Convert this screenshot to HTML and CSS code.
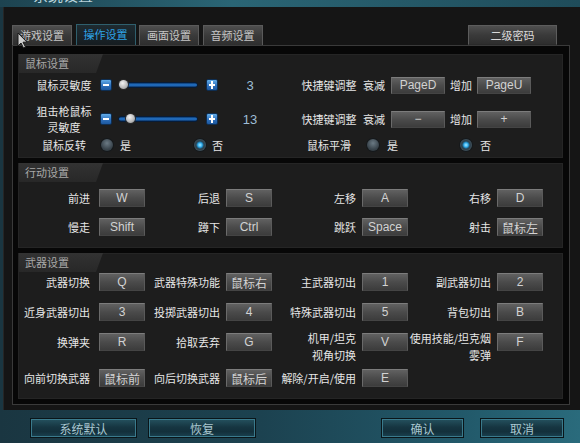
FILE: index.html
```html
<!DOCTYPE html>
<html lang="zh-CN">
<head>
<meta charset="utf-8">
<title>操作设置</title>
<link rel="stylesheet" href="styles.css">
</head>
<body>
<div class="titlebar"><span class="title">系统设置</span></div>
<div class="window">
  <div class="tabbar">
    <div class="tab">游戏设置</div>
    <div class="tab active">操作设置</div>
    <div class="tab">画面设置</div>
    <div class="tab">音频设置</div>
    <div class="pwd">二级密码</div>
  </div>
  <div class="content">
    <section class="section sec-mouse">
      <div class="sec-head">鼠标设置</div>
      <div class="mrow r1">
        <div class="mlabel">鼠标灵敏度</div>
        <div class="slider-group">
          <span class="sbtn minus"></span>
          <span class="track"><span class="thumb" style="left:0px"></span></span>
          <span class="sbtn plus"></span>
          <span class="value">3</span>
        </div>
        <div class="mlabel2">快捷键调整</div>
        <div class="hotkeys">
          <span class="hk-label first">衰减</span><span class="key wide">PageD</span><span class="hk-label">增加</span><span class="key wide">PageU</span>
        </div>
      </div>
      <div class="mrow r2">
        <div class="mlabel two">狙击枪鼠标<br>灵敏度</div>
        <div class="slider-group">
          <span class="sbtn minus"></span>
          <span class="track"><span class="thumb" style="left:7px"></span></span>
          <span class="sbtn plus"></span>
          <span class="value">13</span>
        </div>
        <div class="mlabel2">快捷键调整</div>
        <div class="hotkeys">
          <span class="hk-label first">衰减</span><span class="key wide">−</span><span class="hk-label">增加</span><span class="key wide">+</span>
        </div>
      </div>
      <div class="mrow r3">
        <div class="mlabel">鼠标反转</div>
        <div class="radios left">
          <span class="radio"></span><span class="rlabel">是</span>
          <span class="radio on second"></span><span class="rlabel">否</span>
        </div>
        <div class="mlabel2">鼠标平滑</div>
        <div class="radios right">
          <span class="radio"></span><span class="rlabel">是</span>
          <span class="radio on second"></span><span class="rlabel">否</span>
        </div>
      </div>
    </section>

    <section class="section sec-move">
      <div class="sec-head">行动设置</div>
      <div class="kgrid">
        <div class="kl c1">前进</div><div class="key">W</div>
        <div class="kl">后退</div><div class="key">S</div>
        <div class="kl">左移</div><div class="key">A</div>
        <div class="kl">右移</div><div class="key">D</div>
        <div class="kl c1">慢走</div><div class="key">Shift</div>
        <div class="kl">蹲下</div><div class="key">Ctrl</div>
        <div class="kl">跳跃</div><div class="key">Space</div>
        <div class="kl">射击</div><div class="key">鼠标左</div>
      </div>
    </section>

    <section class="section sec-weapon">
      <div class="sec-head">武器设置</div>
      <div class="kgrid">
        <div class="kl c1">武器切换</div><div class="key">Q</div>
        <div class="kl">武器特殊功能</div><div class="key">鼠标右</div>
        <div class="kl">主武器切出</div><div class="key">1</div>
        <div class="kl">副武器切出</div><div class="key">2</div>

        <div class="kl c1">近身武器切出</div><div class="key">3</div>
        <div class="kl">投掷武器切出</div><div class="key">4</div>
        <div class="kl">特殊武器切出</div><div class="key">5</div>
        <div class="kl">背包切出</div><div class="key">B</div>

        <div class="kl c1">换弹夹</div><div class="key">R</div>
        <div class="kl">拾取丢弃</div><div class="key">G</div>
        <div class="kl two">机甲/坦克<br>视角切换</div><div class="key">V</div>
        <div class="kl two">使用技能/坦克烟<br>雾弹</div><div class="key">F</div>

        <div class="kl c1">向前切换武器</div><div class="key">鼠标前</div>
        <div class="kl">向后切换武器</div><div class="key">鼠标后</div>
        <div class="kl">解除/开启/使用</div><div class="key">E</div>
      </div>
    </section>
  </div>
</div>
<div class="bottombar">
  <div class="bbtn b1">系统默认</div>
  <div class="bbtn b2">恢复</div>
  <div class="bbtn b3">确认</div>
  <div class="bbtn b4">取消</div>
</div>
<svg class="cursor" width="11" height="17" viewBox="0 0 11 17">
  <path d="M1 1 L1 14 L4 11 L6.5 16 L8.5 15 L6 10.2 L10 10.2 Z" fill="#cfcfcf" stroke="#1a1a1a" stroke-width="1" stroke-linejoin="round"/>
</svg>
</body>
</html>
```

FILE: styles.css
```css
* {
  box-sizing: border-box;
  margin: 0;
  padding: 0;
}

html,
body {
  width: 580px;
  height: 443px;
  overflow: hidden;
}

body {
  position: relative;
  background: linear-gradient(90deg, #1a3641 0%, #1c4250 45%, #22596a 80%, #2a6b7c 100%);
  font-family: "Noto Sans CJK SC", "Noto Sans", sans-serif;
  font-size: 11px;
  color: #e6e6e6;
}

/* ---------- title strip ---------- */
.titlebar {
  height: 7px;
  overflow: hidden;
  display: flex;
  align-items: flex-end;
  padding-left: 33px;
  background: linear-gradient(90deg, #1d4350 0%, #2a6575 40%, #1f4c5a 100%);
}

.title {
  font-size: 15px;
  line-height: 15px;
  margin-bottom: 5px;
  color: #b9d3db;
  white-space: nowrap;
}

/* ---------- window ---------- */
.window {
  margin-left: 3px;
  height: 403px;
  background: #151515;
  border-left: 1px solid #262626;
  padding: 17px 10px 0 8px;
}

.tabbar {
  display: flex;
  align-items: flex-end;
  height: 21px;
  gap: 3.5px;
}

.tab {
  width: 60px;
  height: 20px;
  line-height: 18px;
  text-align: center;
  color: #c6c6c6;
  background: linear-gradient(#4e4e4e, #3a3a3a 50%, #2e2e2e);
  border: 1px solid #5a5a5a;
  border-bottom: none;
}

.tab.active {
  height: 21px;
  line-height: 19px;
  background: linear-gradient(#1e2b31, #161d21);
  border-color: #2f5f6d;
  color: #2ea3e6;
}

.pwd {
  margin-left: auto;
  margin-right: 13px;
  width: 89px;
  height: 20px;
  line-height: 18px;
  text-align: center;
  color: #dadada;
  background: linear-gradient(#4e4e4e, #3a3a3a 50%, #2e2e2e);
  border: 1px solid #5c5c5c;
  border-bottom-color: #2a2a2a;
}

.content {
  height: 360px;
  border: 1px solid #3a3a3a;
  background: #070707;
  padding: 7px 6px 0 5px;
}

/* ---------- sections ---------- */
.section {
  background: #1d1d1d;
  box-shadow: inset 0 0 0 1px #252525;
  margin-bottom: 5px;
}

.sec-mouse { height: 104px; }
.sec-move { height: 85px; }
.sec-weapon { height: 146px; }

.sec-head {
  width: 84px;
  height: 19px;
  margin: 1px 0 0 1px;
  padding-left: 6px;
  line-height: 19px;
  color: #a8a8a8;
  background: linear-gradient(#323232, #282828);
  clip-path: polygon(0 0, 100% 0, calc(100% - 7px) 100%, 0 100%);
}

/* ---------- mouse rows ---------- */
.mrow {
  display: grid;
  grid-template-columns: 82px 196px 66px 1fr;
  align-items: center;
}

.r1 { height: 24px; }
.r2 { height: 36px; margin-top: 4px; }
.r3 { height: 14px; }

.mlabel {
  text-align: center;
  padding-left: 10px;
  line-height: 14px;
  white-space: nowrap;
}

.mlabel.two {
  line-height: 16px;
}

.mlabel2 {
  text-align: center;
  white-space: nowrap;
}

.slider-group,
.hotkeys,
.radios {
  display: flex;
  align-items: center;
}

.sbtn {
  position: relative;
  width: 12px;
  height: 12px;
  border-radius: 2px;
  background: linear-gradient(#64aeea, #2e70bc 55%, #1d589f);
  border: 1px solid #0e2e52;
}

.sbtn::before {
  content: "";
  position: absolute;
  left: 2px;
  right: 2px;
  top: 4px;
  height: 2px;
  background: #ffffff;
}

.plus {
  margin-left: 8px;
}

.plus::after {
  content: "";
  position: absolute;
  top: 1px;
  bottom: 1px;
  left: 4px;
  width: 2px;
  background: #ffffff;
}

.track {
  position: relative;
  margin-left: 6px;
  width: 80px;
  height: 6px;
  border-radius: 3px;
  background: linear-gradient(#0d3a6e, #2678d0 50%, #0c3566);
  border: 1px solid #071c38;
}

.thumb {
  position: absolute;
  top: -3px;
  width: 9px;
  height: 9px;
  border-radius: 50%;
  background: radial-gradient(circle at 40% 35%, #f2f2f2, #bdbdbd 55%, #8a8a8a);
  box-shadow: 0 0 0 1px #2a2a2a;
}

.value {
  width: 64px;
  text-align: center;
  font-family: "Liberation Sans", sans-serif;
  font-size: 13px;
  color: #9dbdd6;
}

.hk-label {
  margin-left: 5px;
  white-space: nowrap;
}

.hk-label.first {
  margin-left: 1px;
}

.hk-label.first + .key {
  margin-left: 6px;
}

.hk-label + .key {
  margin-left: 5px;
}

.radio {
  width: 12px;
  height: 12px;
  border-radius: 50%;
  background: radial-gradient(circle at 50% 35%, #6b7a84, #3b464e 60%, #262e34);
  box-shadow: 0 0 0 1px #15191c;
}

.radio.on {
  background: radial-gradient(circle, #a6e8ff 0, #3cb4f0 2px, #1d78aa 3px, #2b3f4b 4px, #3e505b 6px);
}

.radios.left .radio { margin-left: 1px; }
.radios.left .rlabel { margin-left: 7px; }
.radios.left .radio.second { margin-left: 63px; }
.radios.left .radio.second + .rlabel { margin-left: 6px; }

.radios.right .radio { margin-left: 5px; }
.radios.right .rlabel { margin-left: 8px; }
.radios.right .radio.second { margin-left: 62px; }

.rlabel {
  line-height: 14px;
}

/* ---------- key boxes ---------- */
.key {
  height: 18px;
  display: flex;
  align-items: center;
  justify-content: center;
  background: linear-gradient(#616161, #4b4b4b 50%, #3c3c3c);
  border: 1px solid #6c6c6c;
  border-color: #7c7c7c #5a5a5a #444444 #6a6a6a;
  color: #d2d2d2;
  font-family: "Liberation Sans", "Noto Sans CJK SC", sans-serif;
  font-size: 12px;
  white-space: nowrap;
}

.key.wide {
  width: 54px;
  height: 17px;
}

.kgrid {
  display: grid;
  grid-template-columns: 81px 46px 81px 46px 90px 46px 89px 46px;
  align-items: start;
}

.sec-move .kgrid {
  margin-top: 7px;
  grid-template-rows: 18px 18px;
  row-gap: 11px;
}

.sec-weapon .kgrid {
  margin-top: 1px;
  grid-template-rows: 30px 30px 36px 18px;
}

.kl {
  text-align: right;
  padding-right: 6px;
  line-height: 18px;
  white-space: nowrap;
}

.kl.c1 {
  padding-right: 9px;
}

.kl.two {
  line-height: 17px;
  margin-top: -3px;
}

/* ---------- bottom buttons ---------- */
.bottombar {
  display: flex;
  height: 33px;
  padding: 8px 16px 0 30px;
}

.bbtn {
  height: 20px;
  display: flex;
  align-items: center;
  justify-content: center;
  border: 1px solid #0a1519;
  box-shadow: inset 0 0 0 1px #3a7a8c;
  background: linear-gradient(#25525f, #163541 45%, #13303b 70%, #1a4150);
  color: #a9c7d1;
  font-size: 12px;
}

.b1 { width: 107px; }
.b2 { width: 108px; margin-left: 11px; }
.b3 { width: 83px; margin-left: auto; }
.b4 { width: 84px; margin-left: 16px; }

/* mouse pointer captured in the screenshot */
.cursor {
  position: absolute;
  left: 17px;
  top: 32px;
}
```
